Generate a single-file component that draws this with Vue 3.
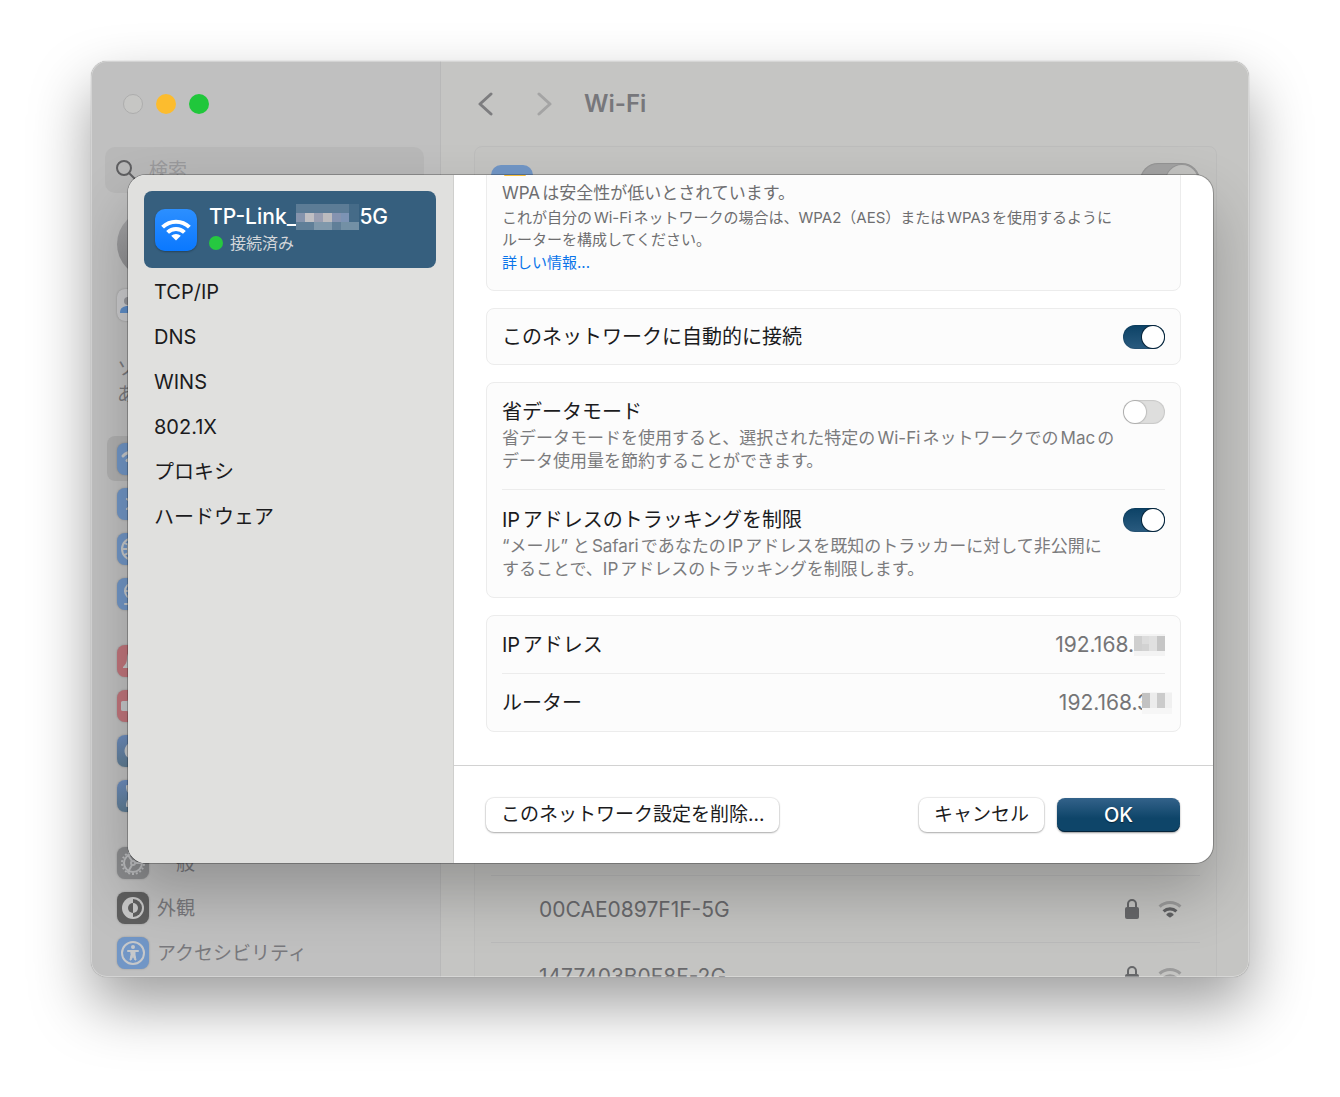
<script setup>
import { ref } from 'vue'

const tabs = ['TCP/IP', 'DNS', 'WINS', '802.1X', 'プロキシ', 'ハードウェア']

const navGroups = [
  [
    { id: 'wifi', tint: 'blue', active: true },
    { id: 'bluetooth', tint: 'blue' },
    { id: 'network', tint: 'blue' },
    { id: 'vpn', tint: 'blue' },
  ],
  [
    { id: 'bell', tint: 'red' },
    { id: 'sound', tint: 'red' },
    { id: 'moon', tint: 'indigo' },
    { id: 'hourglass', tint: 'indigo' },
  ],
  [
    { id: 'gear', tint: 'grey', label: '一般' },
    { id: 'appearance', tint: 'dark', label: '外観' },
    { id: 'accessibility', tint: 'blue', label: 'アクセシビリティ' },
  ],
]

const networks = [
  { name: '00CAE0897F1F-5G', strong: true },
  { name: '1477403B0F8F-2G', strong: false },
]

const gearTeeth = Array.from({ length: 18 }, (_, i) => i * 20)

const autoJoin = ref(true)
const lowData = ref(false)
const limitTracking = ref(true)
const wifiOn = ref(true)
</script>

<template>
  <div class="desktop">
    <div class="window">
      <aside class="sidebar">
        <div class="lights">
          <button class="light close" aria-label="閉じる"></button>
          <button class="light minimize" aria-label="しまう"></button>
          <button class="light zoom" aria-label="拡大"></button>
        </div>
        <label class="search">
          <svg width="20" height="20" viewBox="0 0 20 20" fill="none" stroke="#5f5f61" stroke-width="2" stroke-linecap="round">
            <circle cx="8" cy="8" r="7" />
            <path d="M13 13l6 6" />
          </svg>
          <input type="search" placeholder="検索" />
        </label>
        <div class="avatar"></div>
        <div class="tile family">
          <svg width="32" height="32" viewBox="0 0 32 32">
            <circle cx="11" cy="12" r="4" fill="#96979b" />
            <path d="M3 24c0-5 3-7 8-7s8 2 8 7z" fill="#5f8ec8" />
            <circle cx="21" cy="12" r="4" fill="#96979b" />
          </svg>
        </div>
        <p class="update">ソ<br />あ</p>
        <nav class="nav">
          <div v-for="(group, g) in navGroups" :key="g" class="nav-group">
            <a v-for="item in group" :key="item.id" href="#" class="nav-item" :class="{ active: item.active }">
              <span class="tile" :class="item.tint">
                <svg width="32" height="32" viewBox="0 0 32 32" fill="none" stroke="#c6c8ca" stroke-width="2" stroke-linecap="round" stroke-linejoin="round">
                  <template v-if="item.id === 'wifi'">
                    <path d="M6 13a14 14 0 0 1 20 0M10 17.500a8.500 8.500 0 0 1 12 0" stroke-width="3" />
                    <path d="M16 24l-3-3a4 4 0 0 1 6 0z" fill="#c6c8ca" />
                  </template>
                  <path v-else-if="item.id === 'bluetooth'" d="M10 11l12 10-6 5V6l6 5-12 10" />
                  <template v-else-if="item.id === 'network'">
                    <circle cx="16" cy="16" r="11" />
                    <ellipse cx="16" cy="16" rx="5" ry="11" />
                    <path d="M5 16h22M7 10c5 3 13 3 18 0M7 22c5-3 13-3 18 0" />
                  </template>
                  <template v-else-if="item.id === 'vpn'">
                    <circle cx="16" cy="13" r="8" />
                    <ellipse cx="16" cy="13" rx="4" ry="8" />
                    <path d="M8 13h16M16 21v5M8 26h16" />
                  </template>
                  <path v-else-if="item.id === 'bell'" fill="#c6c8ca" stroke="none" d="M16 6c-4 0-6 3-6 7 0 5-2 7-4 9v1h20v-1c-2-2-4-4-4-9 0-4-2-7-6-7zM13 25h6c-1 3-5 3-6 0z" />
                  <path v-else-if="item.id === 'sound'" fill="#c6c8ca" stroke="none" d="M6 11h4c1 0 1-1 1-5h5v20h-5c0-4 0-5-1-5H6c-2 0-2-1-2-2v-6c0-1 0-2 2-2z" />
                  <path v-else-if="item.id === 'moon'" fill="#c6c8ca" stroke="none" d="M15 7a9 9 0 1 0 10 12 9 9 0 0 1-10-12z" />
                  <path v-else-if="item.id === 'hourglass'" fill="#c6c8ca" d="M10 6h12v2c0 4-4 5-4 8s4 4 4 8v2H10v-2c0-4 4-5 4-8s-4-4-4-8z" />
                  <g v-else-if="item.id === 'gear'" stroke="#bcbdbf">
                    <circle cx="16" cy="16" r="9" />
                    <path v-for="a in gearTeeth" :key="a" d="M16 6V4" stroke-linecap="butt" :transform="`rotate(${a} 16 16)`" />
                    <circle cx="16" cy="16" r="2" />
                    <path d="M18 16h7M15 18l-4 7M15 14l-4-6" />
                  </g>
                  <g v-else-if="item.id === 'appearance'" stroke="none">
                    <circle cx="16" cy="16" r="11" fill="#c8c8c8" />
                    <path d="M16 7a9 9 0 0 1 0 18z" fill="#5f5f5f" />
                    <path d="M16 11a5 5 0 0 0 0 10z" fill="#5f5f5f" />
                    <path d="M16 11a5 5 0 0 1 0 10z" fill="#c8c8c8" />
                  </g>
                  <g v-else>
                    <circle cx="16" cy="16" r="11" />
                    <circle cx="16" cy="10" r="2" fill="#c6c8ca" stroke="none" />
                    <path d="M11 14h10" />
                    <path d="M14 14h4v4l1 5h-1l-2-4-2 4h-1l1-5z" fill="#c6c8ca" stroke-width="1" />
                  </g>
                </svg>
              </span>
              <span v-if="item.label" class="nav-label">{{ item.label }}</span>
            </a>
          </div>
        </nav>
      </aside>

      <main class="content">
        <header class="toolbar">
          <button class="arrow" aria-label="戻る">
            <svg width="16" height="26" viewBox="0 0 16 26" fill="none" stroke="#7d7d7f" stroke-width="3" stroke-linecap="round" stroke-linejoin="round"><path d="M13 3L2 13l11 10" /></svg>
          </button>
          <button class="arrow next" aria-label="進む">
            <svg width="16" height="26" viewBox="0 0 16 26" fill="none" stroke="#a4a4a4" stroke-width="3" stroke-linecap="round" stroke-linejoin="round"><path d="M3 3l11 10L3 23" /></svg>
          </button>
          <h1>Wi-Fi</h1>
        </header>
        <section class="pane">
          <div class="pane-top">
            <span class="pane-icon"></span>
            <input v-model="wifiOn" type="checkbox" class="switch large" aria-label="Wi-Fi" />
          </div>
          <ul class="networks">
            <li v-for="n in networks" :key="n.name">
              <span>{{ n.name }}</span>
              <svg width="16" height="22" viewBox="0 0 16 22">
                <path d="M4 10V6a4 4 0 0 1 8 0v4" fill="none" stroke="#666769" stroke-width="2" />
                <rect x="1" y="9" width="14" height="12" rx="2" fill="#666769" />
              </svg>
              <svg width="24" height="18" viewBox="0 0 30 22" fill="none" stroke-width="4" stroke-linejoin="round">
                <path d="M2 8a19 19 0 0 1 26 0" stroke="#9b9b9b" />
                <path d="M7 14a12 12 0 0 1 16 0" :stroke="n.strong ? '#606163' : '#9b9b9b'" />
                <path d="M15 20l-3-2a5 5 0 0 1 6 0z" fill="#606163" stroke="#606163" stroke-width="3" />
              </svg>
            </li>
          </ul>
        </section>
      </main>

      <div class="dialog" role="dialog" aria-label="Wi-Fi">
        <aside class="tabs">
          <a href="#" class="current">
            <span class="app-icon">
              <svg width="30" height="23" viewBox="0 0 30 23">
                <g fill="none" stroke="#fff" stroke-width="4">
                  <path d="M1.600 9.200a19 19 0 0 1 26.800 0" />
                  <path d="M6.600 14.400a12 12 0 0 1 16.800 0" />
                </g>
                <path d="M15 22.500l-4.800-4.700a7 7 0 0 1 9.600 0z" fill="#fff" />
              </svg>
            </span>
            <span class="current-text">
              <span class="ssid">
                TP-Link_<svg class="mosaic" width="63" height="26" viewBox="0 0 63 26" shape-rendering="crispEdges">
                  <rect width="63" height="26" fill="#607f98" />
                  <rect width="53" height="9" fill="#5c7c96" />
                  <rect x="53" width="10" height="18" fill="#456b88" />
                  <rect y="9" width="9" height="9" fill="#8594ad" />
                  <rect x="9" y="9" width="9" height="9" fill="#c0bfc3" />
                  <rect x="18" y="9" width="9" height="9" fill="#9a9fb2" />
                  <rect x="27" y="9" width="9" height="9" fill="#bcbbbe" />
                  <rect x="36" y="9" width="9" height="9" fill="#8593b0" />
                  <rect x="45" y="9" width="8" height="9" fill="#7c93b4" />
                  <rect x="18" y="18" width="18" height="8" fill="#7f98ab" />
                  <rect x="45" y="18" width="18" height="8" fill="#7390a5" />
                </svg>5G
              </span>
              <span class="status"><i></i>接続済み</span>
            </span>
          </a>
          <nav>
            <a v-for="t in tabs" :key="t" href="#">{{ t }}</a>
          </nav>
        </aside>

        <div class="detail">
          <div class="scroll">
            <section class="card warning">
              <svg class="caution" width="22" height="20" viewBox="0 0 22 20"><path d="M11 1l10 18H1z" fill="#f6be3b" stroke="#f6be3b" stroke-width="2" stroke-linejoin="round" /></svg>
              <p class="lead">WPAは安全性が低いとされています。</p>
              <p class="small">これが自分のWi-Fiネットワークの場合は、WPA2（AES）またはWPA3を使用するように<br />ルーターを構成してください。</p>
              <a href="#">詳しい情報...</a>
            </section>

            <section class="card">
              <div class="row single">
                <label for="auto-join">このネットワークに自動的に接続</label>
                <input id="auto-join" v-model="autoJoin" type="checkbox" class="switch" />
              </div>
            </section>

            <section class="card">
              <div class="row">
                <div>
                  <label for="low-data">省データモード</label>
                  <p>省データモードを使用すると、選択された特定のWi-FiネットワークでのMacの<br />データ使用量を節約することができます。</p>
                </div>
                <input id="low-data" v-model="lowData" type="checkbox" class="switch" />
              </div>
              <div class="row">
                <div>
                  <label for="tracking">IPアドレスのトラッキングを制限</label>
                  <p>“メール” とSafariであなたのIPアドレスを既知のトラッカーに対して非公開に<br />することで、IPアドレスのトラッキングを制限します。</p>
                </div>
                <input id="tracking" v-model="limitTracking" type="checkbox" class="switch" />
              </div>
            </section>

            <section class="card">
              <div class="row single">
                <span>IPアドレス</span>
                <span class="value">192.168.<svg width="31" height="22" viewBox="0 0 31 22" shape-rendering="crispEdges">
                  <rect width="31" height="22" fill="#f3f3f3" />
                  <rect y="2" width="8" height="15" fill="#cfcfcf" />
                  <rect x="8" y="2" width="7" height="8" fill="#dcdcdc" />
                  <rect x="8" y="10" width="7" height="7" fill="#d2d2d2" />
                  <rect x="15" y="2" width="8" height="15" fill="#e0e0e0" />
                  <rect x="23" y="2" width="8" height="15" fill="#c6c6c6" />
                </svg></span>
              </div>
              <div class="row single">
                <span>ルーター</span>
                <span class="value shifted">192.168.3<svg class="cover" width="30" height="22" viewBox="0 0 30 22" shape-rendering="crispEdges">
                  <rect width="30" height="22" fill="#f6f6f6" />
                  <rect y="1" width="8" height="15" fill="#c2c2c2" />
                  <rect x="8" y="1" width="7" height="15" fill="#ececec" />
                  <rect x="15" y="1" width="8" height="15" fill="#cbcbcb" />
                  <rect x="23" y="1" width="7" height="15" fill="#f0f0f0" />
                </svg></span>
              </div>
            </section>
          </div>

          <footer>
            <button class="btn forget">このネットワーク設定を削除...</button>
            <button class="btn">キャンセル</button>
            <button class="btn primary">OK</button>
          </footer>
        </div>
      </div>
    </div>
  </div>
</template>

<style>
body {
  background: #fff;
}
</style>

<style scoped>
* {
  box-sizing: border-box;
}

.desktop {
  display: flex;
  height: 100vh;
  padding: 61px 91px 120px;
  overflow: hidden;
  font: 20px/1 Inter, 'Noto Sans CJK JP', sans-serif;
  text-autospace: normal;
  color: #1b1b1d;
}

a {
  color: inherit;
  text-decoration: none;
}

p,
h1,
ul {
  margin: 0;
  padding: 0;
}

button {
  padding: 0;
  border: 0;
  background: none;
  font: inherit;
  color: inherit;
}

svg {
  flex: none;
}

.window {
  position: relative;
  display: flex;
  flex: 1;
  min-width: 0;
  border-radius: 16px;
  overflow: hidden;
  background: #c5c5c3;
  box-shadow: 0 28px 60px rgba(0, 0, 0, 0.38), 0 0 1px rgba(0, 0, 0, 0.4);
}

.window::after {
  content: '';
  position: absolute;
  inset: 0;
  border-radius: 16px;
  box-shadow: inset 0 0 0 1px rgba(255, 255, 255, 0.3);
  pointer-events: none;
}

/* Settings sidebar */
.sidebar {
  flex: none;
  width: 350px;
  padding: 0 16px 0 14px;
  border-right: 1px solid #b8b8b8;
  background: #c0c0c0;
  color: #79797d;
}

.lights {
  display: flex;
  align-items: center;
  gap: 13px;
  height: 86px;
  padding-left: 18px;
}

.light {
  width: 20px;
  height: 20px;
  border-radius: 50%;
}

.close {
  border: 1px solid #adadad;
  background: #c6c6c4;
}

.minimize {
  background: #fcbc2e;
}

.zoom {
  background: #20c73b;
}

.search {
  display: flex;
  align-items: center;
  gap: 13px;
  height: 46px;
  padding: 0 11px;
  border-radius: 10px;
  background: #b8b8b8;
  font-size: 19px;
}

.search input {
  flex: 1;
  min-width: 0;
  padding: 0;
  border: 0;
  outline: 0;
  background: none;
  font: inherit;
}

.search input::placeholder {
  color: #9a9a9c;
}

.avatar {
  width: 68px;
  height: 68px;
  margin: 17px 0 11px 12px;
  border-radius: 50%;
  background: linear-gradient(#a6a6a8, #8c8c8e);
}

.tile {
  flex: none;
  display: block;
  width: 32px;
  height: 32px;
  border-radius: 8px;
  box-shadow: 0 0 2px rgba(0, 0, 0, 0.25);
}

.tile svg {
  display: block;
}

.family {
  margin-left: 12px;
  background: #cbcbcd;
}

.update {
  margin: 35px 0 28px 12px;
  font-size: 19px;
  line-height: 26px;
}

.nav-group + .nav-group {
  margin-top: 22px;
}

.nav-item {
  display: flex;
  align-items: center;
  gap: 8px;
  height: 45px;
  margin-left: 2px;
  padding-left: 10px;
  border-radius: 8px;
}

.nav-item.active {
  background: #b0b0b0;
}

.nav-label {
  padding-top: 2px;
  font-size: 19px;
}

.blue {
  background: #7196c6;
}

.red {
  background: #c1757c;
}

.indigo {
  background: linear-gradient(#6d8dbe, #5f7c92);
}

.grey {
  background: #8b8c8e;
}

.dark {
  background: #5f5f5f;
}

/* Wi-Fi pane behind the dialog */
.content {
  display: flex;
  flex: 1;
  flex-direction: column;
  min-width: 0;
  padding: 0 32px 0 33px;
}

.toolbar {
  display: flex;
  flex: none;
  align-items: center;
  height: 85px;
  padding-left: 4px;
}

.arrow {
  width: 16px;
  height: 26px;
}

.next {
  margin: 0 32px 0 42px;
}

h1 {
  font-size: 24px;
  font-weight: 600;
  color: #77777b;
}

.pane {
  display: flex;
  flex: 1;
  flex-direction: column;
  justify-content: space-between;
  margin-bottom: -33px;
  padding: 0 16px;
  border: 1px solid #bdbdbc;
  border-radius: 8px;
  background: #c4c4c2;
}

.pane-top {
  display: flex;
  justify-content: space-between;
  padding: 16px 0;
}

.pane-icon {
  width: 42px;
  height: 42px;
  margin-top: 2px;
  border-radius: 10px;
  background: #7196c6;
}

.networks {
  list-style: none;
  color: #69696c;
  font-size: 21px;
}

.networks li {
  display: flex;
  align-items: center;
  gap: 18px;
  height: 67px;
  padding: 0 18px 0 48px;
  border-top: 1px solid #bababa;
}

.networks span {
  flex: 1;
}

/* Network detail sheet */
.dialog {
  position: absolute;
  z-index: 1;
  inset: 114px 36px 114px 37px;
  display: flex;
  border-radius: 18px;
  background: #fff;
  box-shadow: 0 0 0 1px rgba(0, 0, 0, 0.25), 0 30px 60px rgba(0, 0, 0, 0.24);
}

.tabs {
  flex: none;
  width: 326px;
  padding: 16px 17px 16px 16px;
  border-right: 1px solid #cfcfcd;
  border-radius: 18px 0 0 18px;
  background: #e0e0de;
}

.current {
  display: flex;
  align-items: center;
  gap: 12px;
  height: 77px;
  padding: 0 11px;
  border-radius: 8px;
  background: #365f7e;
  color: #fff;
}

.app-icon {
  display: grid;
  place-items: center;
  width: 42px;
  height: 42px;
  border-radius: 10px;
  background: linear-gradient(#2c8fff, #0a78ff);
  box-shadow: 0 1px 2px rgba(0, 0, 0, 0.3);
}

.ssid,
.status {
  display: flex;
  align-items: center;
  height: 26px;
}

.ssid {
  font-size: 21px;
  font-weight: 500;
}

.status {
  gap: 7px;
  font-size: 16px;
  color: #d3d6da;
}

.status i {
  width: 14px;
  height: 14px;
  border-radius: 50%;
  background: #26c840;
}

.tabs nav {
  margin-top: 2px;
}

.tabs nav a {
  display: block;
  padding-left: 10px;
  line-height: 45px;
}

.detail {
  display: flex;
  flex: 1;
  flex-direction: column;
  min-width: 0;
}

.scroll {
  display: flex;
  flex: 1;
  flex-direction: column;
  justify-content: flex-end;
  gap: 17px;
  min-height: 0;
  padding: 0 32px 33px;
  overflow: hidden;
  border-top-right-radius: 18px;
}

.card {
  flex: none;
  padding: 0 15px;
  border: 1px solid #ececec;
  border-radius: 8px;
  background: #fcfcfc;
}

.warning {
  padding-bottom: 15px;
  color: #6e6e70;
  font-size: 15px;
}

.caution {
  display: block;
  margin: 12px 0 3px 2px;
}

.lead {
  font-size: 17px;
  line-height: 28px;
}

.small {
  line-height: 22px;
}

.warning a {
  display: block;
  line-height: 24px;
  color: #0a74ea;
}

.row {
  display: flex;
  align-items: flex-start;
  justify-content: space-between;
  padding: 15px 0;
}

.row + .row {
  padding-top: 16px;
  border-top: 1px solid #ececec;
}

.row label {
  display: block;
  line-height: 28px;
}

.row p {
  margin-top: 1px;
  padding-bottom: 1px;
  font-size: 17px;
  line-height: 23px;
  color: #7b7b7d;
}

.row .switch {
  margin-top: 2px;
}

.card .single {
  align-items: center;
  padding: 14px 0 13px;
  line-height: 30px;
}

.card .single .switch {
  margin: 0;
}

.value {
  display: flex;
  align-items: center;
  font-size: 21px;
  color: #757577;
}

.shifted {
  margin-right: -7px;
}

.cover {
  margin-left: -8px;
}

.switch {
  flex: none;
  display: flex;
  width: 42px;
  height: 24px;
  margin: 0;
  padding: 1px;
  appearance: none;
  border-radius: 12px;
  background: #dededd;
  box-shadow: inset 0 0 1px 1px rgba(0, 0, 0, 0.1);
}

.switch::before {
  content: '';
  width: 22px;
  height: 22px;
  border-radius: 50%;
  background: #fff;
  box-shadow: 0 0 1px 1px rgba(0, 0, 0, 0.15);
}

.switch:checked {
  justify-content: flex-end;
  background: linear-gradient(#0c4266, #2a5b7f);
}

.switch:checked::before {
  box-shadow: 0 0 0 1px #06243a;
}

.switch.large {
  width: 60px;
  height: 36px;
  padding: 2px;
  border-radius: 18px;
  background: #a3a3a3;
}

.switch.large::before {
  width: 32px;
  height: 32px;
  background: #c2c2c0;
  box-shadow: 0 0 0 1px #989898;
}

footer {
  display: flex;
  flex: none;
  align-items: center;
  gap: 13px;
  height: 98px;
  padding: 0 33px 0 32px;
  border-top: 1px solid #d2d2d2;
}

.btn {
  height: 34px;
  padding: 0 15px;
  border-radius: 8px;
  background: #fff;
  box-shadow: 0 0 1px 1px rgba(0, 0, 0, 0.08), 0 1px 2px rgba(0, 0, 0, 0.28);
  font-size: 19px;
}

.forget {
  margin-right: auto;
}

.primary {
  width: 123px;
  background: linear-gradient(#33628a, #0e4569 60%);
  box-shadow: inset 0 -1px 0 #06243a, 0 1px 2px rgba(0, 0, 0, 0.4);
  color: #fff;
  font-size: 20px;
  font-weight: 500;
  text-shadow: 0 1px 1px rgba(0, 0, 0, 0.5);
}
</style>
